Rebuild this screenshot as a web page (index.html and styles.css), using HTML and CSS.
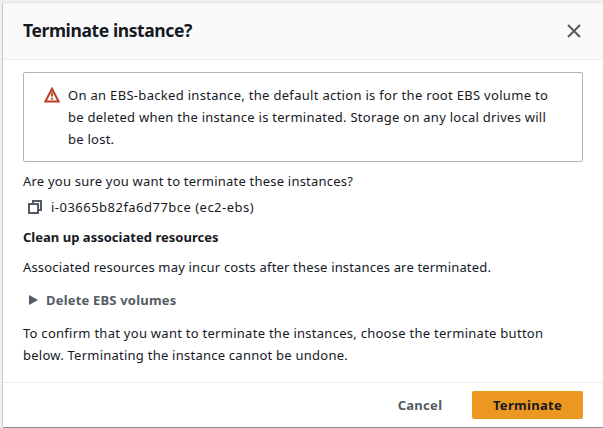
FILE: index.html
```html
<!DOCTYPE html>
<html lang="en">
<head>
<meta charset="utf-8">
<title>Terminate instance?</title>
<link rel="stylesheet" href="styles.css">
</head>
<body>
<div class="modal" role="dialog">
  <header class="header">
    <h2 class="title">Terminate instance?</h2>
    <svg class="close" width="16" height="16" viewBox="0 0 16 16"><path d="M2 2l12 12M14 2L2 14" fill="none" stroke="#545b64" stroke-width="2"/></svg>
  </header>
  <main class="content">
    <div class="alert">
      <svg class="warning" width="16" height="16" viewBox="0 0 16 16"><path d="M8 1.8L1.4 14.5h13.2z" fill="none" stroke="#bd3c20" stroke-width="2"/><path d="M8 5.5v4M8 10.7v2" fill="none" stroke="#bd3c20" stroke-width="1.8"/></svg>
      <p class="message"><span class="l1">On an EBS-backed instance, the default action is for the root EBS volume to</span><br><span class="l2">be deleted when the instance is terminated. Storage on any local drives will</span><br><span class="l3">be lost.</span></p>
    </div>
    <p class="question">Are you sure you want to terminate these instances?</p>
    <div class="instance">
      <svg width="16" height="16" viewBox="0 0 16 16"><path d="M2 5h9v9H2zM6 5V2h8v9h-3" fill="none" stroke="#545b64" stroke-width="2"/></svg>
      <span class="name">i-03665b82fa6d77bce (ec2-ebs)</span>
    </div>
    <h3 class="subhead">Clean up associated resources</h3>
    <p class="costs">Associated resources may incur costs after these instances are terminated.</p>
    <div class="expander">
      <svg width="9" height="10" viewBox="0 0 9 10"><path d="M0 0v10l9-5z" fill="#545b64"/></svg>
      <span class="expander-label">Delete EBS volumes</span>
    </div>
    <p class="confirm"><span class="l4">To confirm that you want to terminate the instances, choose the terminate button</span><br><span class="l5">below. Terminating the instance cannot be undone.</span></p>
  </main>
  <footer class="footer">
    <button class="cancel"><span>Cancel</span></button>
    <button class="primary"><span>Terminate</span></button>
  </footer>
</div>
</body>
</html>
```
FILE: styles.css
```css
* { box-sizing: border-box; }
body {
  margin: 0;
  height: 428px;
  padding: 3px 0 1px 3px;
  overflow: hidden;
  background: #f0f0f0;
  color: #16191f;
  font: 13px/22px "Noto Sans", sans-serif;
  white-space: nowrap;
}
h2, h3, p { margin: 0; }
svg { flex: none; display: block; }
.modal {
  height: 424px;
  background: #fff;
  box-shadow: -1px 0 #c9cccc, 0 -1px #e3e4e4, 0 1px #8b8e8e;
}
.header {
  display: flex;
  align-items: center;
  justify-content: space-between;
  height: 57px;
  padding: 0 21px 0 20px;
  background: #fafafa;
  border-bottom: 1px solid #eaeded;
}
.title { font-size: 17.5px; line-height: 24px; font-weight: 700; letter-spacing: -.4px; padding-bottom: 2px; }
.content { height: 322px; padding: 12px 20px 0; }
.alert {
  display: flex;
  gap: 8px;
  height: 90px;
  padding: 11px 20px;
  border: 1px solid #aab7b8;
  border-radius: 2px;
}
.warning { margin-top: 3px; }
.l1 { letter-spacing: .305px; }
.l2 { letter-spacing: .255px; }
.l3 { letter-spacing: .25px; }
.l4 { letter-spacing: .27px; }
.l5 { letter-spacing: .24px; }
.question { margin-top: 8px; letter-spacing: .21px; }
.instance { display: flex; align-items: center; gap: 8px; margin-top: 4px; padding-left: 4px; }
.name { letter-spacing: .48px; }
.subhead { margin-top: 8px; font-size: 13px; font-weight: 700; letter-spacing: .02px; }
.costs { margin-top: 8px; letter-spacing: .17px; }
.expander {
  display: flex;
  align-items: center;
  gap: 8px;
  margin-top: 11px;
  padding-left: 6px;
  color: #545b64;
  font-weight: 700;
}
.expander-label { letter-spacing: .19px; }
.confirm { margin-top: 11px; }
.footer {
  display: flex;
  align-items: center;
  justify-content: flex-end;
  gap: 8px;
  height: 45px;
  padding: 0 20px;
  border-top: 1px solid #eaeded;
}
button {
  height: 28px;
  padding: 0;
  border: 0;
  border-radius: 2px;
  background: none;
  color: #545b64;
  font: 700 13px/22px "Noto Sans", sans-serif;
  letter-spacing: .3px;
}
.cancel { width: 88px; }
.primary { width: 111px; background: #ec9820; color: #16191f; }
```
